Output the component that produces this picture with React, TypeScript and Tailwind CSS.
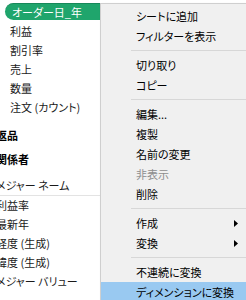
import { ReactNode } from "react";

type MenuEntry =
  | { kind: "item"; label: string; disabled?: boolean; sub?: boolean; active?: boolean }
  | { kind: "sep" };

const menu: MenuEntry[] = [
  { kind: "item", label: "シートに追加" },
  { kind: "item", label: "フィルターを表示" },
  { kind: "sep" },
  { kind: "item", label: "切り取り" },
  { kind: "item", label: "コピー" },
  { kind: "sep" },
  { kind: "item", label: "編集..." },
  { kind: "item", label: "複製" },
  { kind: "item", label: "名前の変更" },
  { kind: "item", label: "非表示", disabled: true },
  { kind: "item", label: "削除" },
  { kind: "sep" },
  { kind: "item", label: "作成", sub: true },
  { kind: "item", label: "変換", sub: true },
  { kind: "sep" },
  { kind: "item", label: "不連続に変換" },
  { kind: "item", label: "ディメンションに変換", active: true },
];

function Row({ children, className = "" }: { children: ReactNode; className?: string }) {
  return <div className={`flex items-center whitespace-nowrap ${className}`}>{children}</div>;
}

function SubArrow() {
  return (
    <svg width="4" height="7" viewBox="0 0 4 7" className="absolute left-[133px]">
      <polygon points="0,0 4,3.5 0,7" fill="#000" />
    </svg>
  );
}

function ContextMenu() {
  return (
    <div className="absolute left-[100px] top-[3px] w-[160px] border border-[#cfcfcf] bg-[#f0f0f0] pt-[2px] shadow-[2px_2px_3px_rgba(0,0,0,0.15)]">
      {menu.map((m, i) =>
        m.kind === "sep" ? (
          <div key={i} className="flex h-[9px] items-center">
            <div className="ml-[30px] h-px flex-1 bg-[#d7d7d7]" />
          </div>
        ) : (
          <div
            key={i}
            className={`relative flex h-[20px] items-center pl-[35px] ${
              m.active ? "bg-[#99c9f1]" : ""
            } ${m.disabled ? "text-[#8d8d8d]" : "text-black"}`}
          >
            {m.label}
            {m.sub && <SubArrow />}
          </div>
        )
      )}
    </div>
  );
}

export default function App() {
  return (
    <div
      className="relative h-[300px] w-[246px] overflow-hidden bg-white text-[11px] text-[#1a1a1a] [font-feature-settings:'palt']"
      style={{ fontFamily: '"Noto Sans CJK JP", "Noto Sans", sans-serif' }}
    >
      <div className="flex flex-col">
        <div className="ml-[5px] mt-[3px] flex h-[17px] w-[122px] items-center rounded-full border-t border-[#17885a] bg-[#1fa56c] pl-[7px] text-white">
          オーダー日_年
        </div>
        <div className="mt-[2px] flex flex-col pl-[10px]">
          <Row className="h-[19px]">利益</Row>
          <Row className="h-[19px]">割引率</Row>
          <Row className="h-[19px]">売上</Row>
          <Row className="h-[19px]">数量</Row>
          <Row className="h-[19px]">注文 (カウント)</Row>
        </div>
        <div className="-ml-[4px] flex w-[104px] flex-col">
          <Row className="mt-[6px] h-[24px] font-bold text-black">返品</Row>
          <Row className="h-[25px] font-bold text-black">関係者</Row>
          <Row className="mt-[4px] h-[19px]">メジャー ネーム</Row>
          <div className="h-px bg-[#e3e3e3]" />
          <Row className="h-[19px]">利益率</Row>
          <Row className="h-[19px]">最新年</Row>
          <Row className="h-[19px]">経度 (生成)</Row>
          <Row className="h-[19px]">緯度 (生成)</Row>
          <Row className="h-[19px]">メジャー バリュー</Row>
        </div>
      </div>
      <ContextMenu />
    </div>
  );
}
